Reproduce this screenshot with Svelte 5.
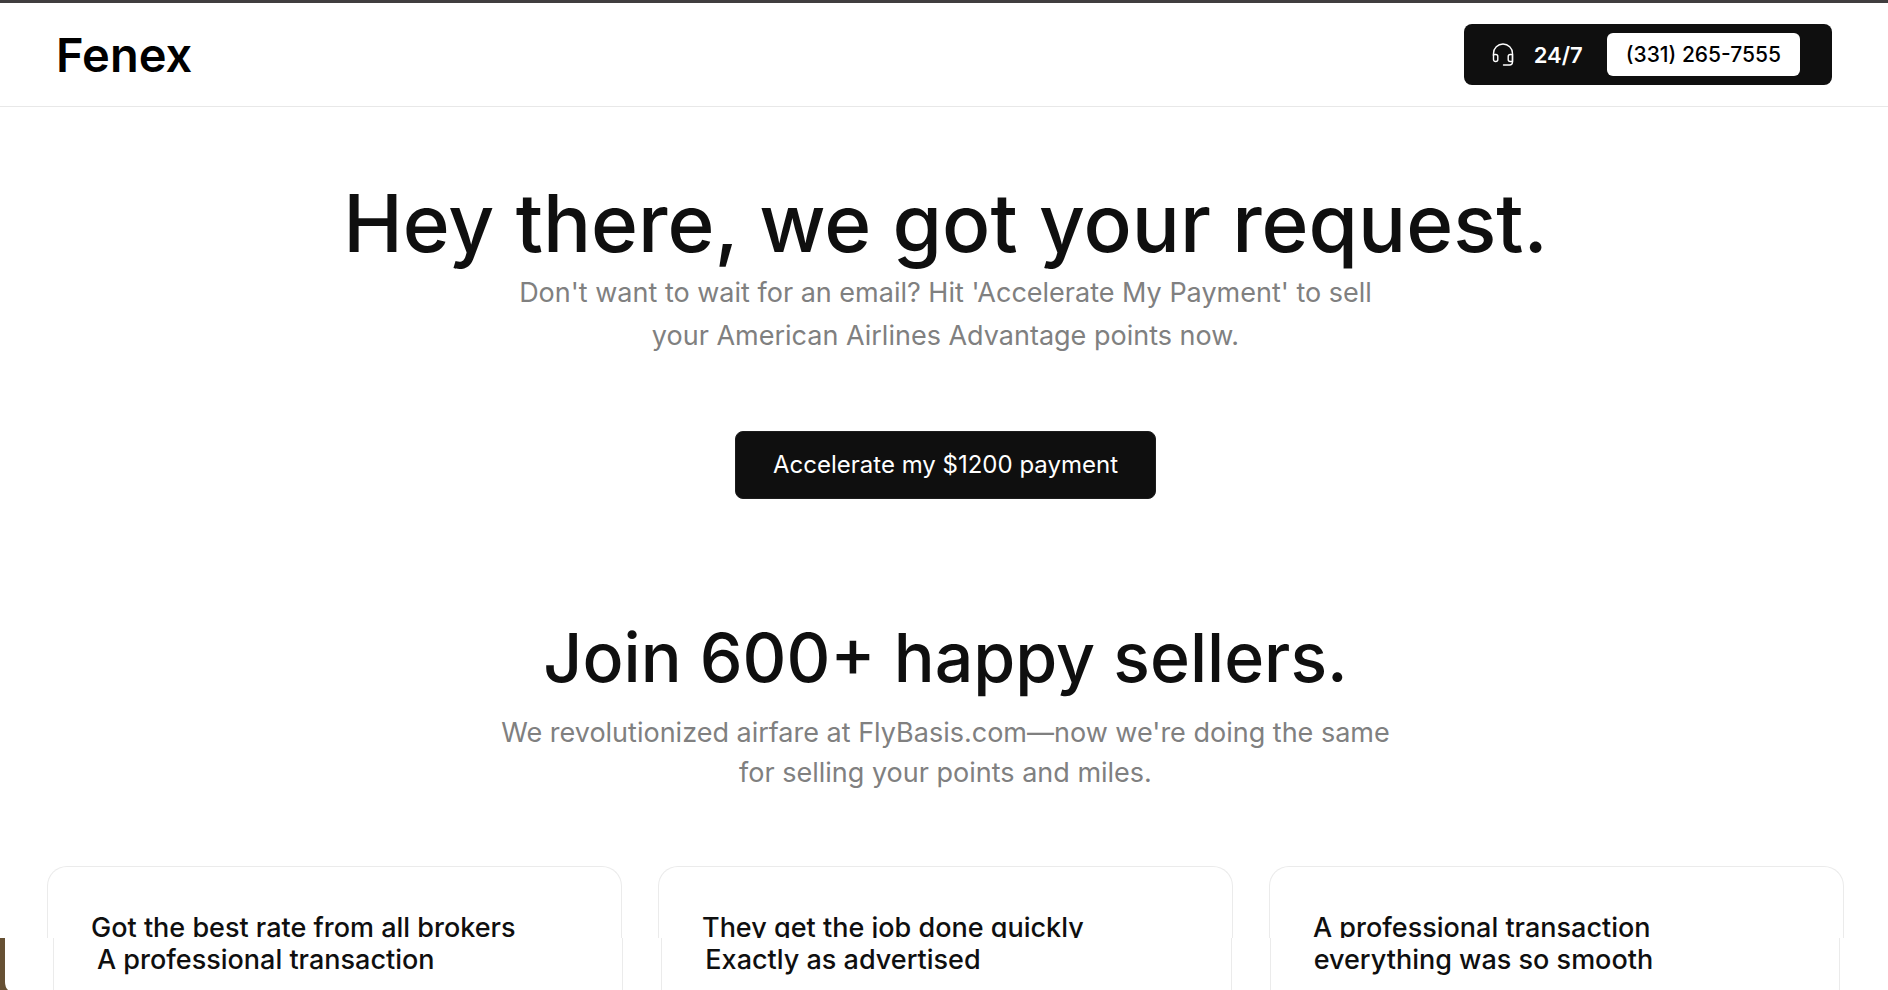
<script>
  const phone = "(331) 265-7555";
  const payout = 1200;

  const reviews = [
    "Got the best rate from all brokers",
    "They get the job done quickly",
    "A professional transaction",
  ];

  const moreReviews = [
    "A professional transaction",
    "Exactly as advertised",
    "everything was so smooth",
  ];
</script>

<div class="page">
  <header>
    <a class="logo" href="/">Fenex</a>
    <div class="support">
      <svg class="headset" viewBox="0 0 22 24" aria-hidden="true">
        <path d="M1.5 12.5V10.5a9.5 9.5 0 0 1 19 0v8.5a3 3 0 0 1-3 3h-6" />
        <path d="M1.5 11.5h2.3a2 2 0 0 1 2 2v3a2 2 0 0 1-2 2h-.3a2 2 0 0 1-2-2z" />
        <path d="M20.5 11.5h-2.3a2 2 0 0 0-2 2v3a2 2 0 0 0 2 2h2.3z" />
      </svg>
      <span class="hours">24/7</span>
      <a class="phone" href="tel:+13312657555">{phone}</a>
    </div>
  </header>

  <main>
    <section class="hero">
      <h1>Hey there, we got your request.</h1>
      <p>
        Don't want to wait for an email? Hit 'Accelerate My Payment' to sell<br />
        your American Airlines Advantage points now.
      </p>
      <button type="button">Accelerate my ${payout} payment</button>
    </section>

    <section class="sellers">
      <h2>Join 600+ happy sellers.</h2>
      <p>
        We revolutionized airfare at FlyBasis.com—now we're doing the same<br />
        for selling your points and miles.
      </p>
    </section>

    <div class="reviews first">
      {#each reviews as title}
        <article class="card">
          <h3>{title}</h3>
        </article>
      {/each}
    </div>

    <div class="reviews second">
      <svg class="photo" viewBox="0 0 8 52" aria-hidden="true">
        <path d="M0 0h5v44q0 5 3 8H0z" />
      </svg>
      {#each moreReviews as title}
        <article class="card">
          <h3>{title}</h3>
        </article>
      {/each}
    </div>
  </main>
</div>

<style>
  :global(body) {
    margin: 0;
    background: #fff;
    overflow: hidden;
  }

  .page {
    border-top: 3px solid #403e3f;
    font-family: Inter, "Liberation Sans", sans-serif;
    color: #0f0f0f;
  }

  header {
    display: flex;
    justify-content: space-between;
    align-items: center;
    height: 103px;
    padding: 0 56px;
    border-bottom: 1px solid #e8e8e8;
  }

  a {
    color: inherit;
    text-decoration: none;
  }

  .logo {
    font-size: 47px;
    font-weight: 600;
    line-height: 60px;
    color: #000;
  }

  .support {
    display: flex;
    align-items: center;
    box-sizing: border-box;
    height: 61px;
    padding: 0 32px 0 28px;
    border-radius: 8px;
    background: #0f0f0f;
    color: #fff;
  }

  .headset {
    width: 22px;
    height: 24px;
    fill: none;
    stroke: #fff;
    stroke-width: 1.4;
    stroke-linecap: round;
    stroke-linejoin: round;
  }

  .hours {
    margin: 0 24px 0 20px;
    font-size: 22px;
    font-weight: 600;
  }

  .phone {
    padding: 0 19px;
    border-radius: 6px;
    background: #fff;
    color: #000;
    font-size: 21px;
    font-weight: 500;
    line-height: 43px;
  }

  .hero,
  .sellers {
    display: flex;
    flex-direction: column;
    align-items: center;
    text-align: center;
  }

  .hero {
    padding: 70px 44px 0 47px;
  }

  h1,
  h2,
  h3,
  p {
    margin: 0;
    font-weight: 500;
  }

  h1 {
    font-size: 80px;
    line-height: 92px;
  }

  h2 {
    font-size: 68px;
    line-height: 80px;
  }

  p {
    color: #808080;
    font-size: 27px;
    font-weight: 400;
  }

  .hero p {
    margin-top: 2px;
    line-height: 43px;
  }

  button {
    margin-top: 74px;
    padding: 0 37px;
    border: 1px solid #1c1c1c;
    border-radius: 8px;
    background: #0f0f0f;
    color: #fff;
    font-family: inherit;
    font-size: 24px;
    line-height: 66px;
  }

  .sellers {
    padding: 118px 44px 73px 47px;
  }

  .sellers p {
    margin-top: 16px;
    line-height: 40px;
  }

  .reviews {
    display: grid;
    grid-template-columns: repeat(3, 1fr);
    height: 72px;
    overflow: hidden;
  }

  .first {
    gap: 36px;
    padding: 0 44px 0 47px;
  }

  .second {
    position: relative;
    gap: 38px;
    height: 52px;
    padding: 0 48px 0 53px;
  }

  .card {
    padding: 42px 43px 0;
    border: 1px solid #ebebeb;
    border-bottom: 0;
    border-radius: 20px 20px 0 0;
  }

  .second .card {
    padding-top: 3px;
    border-top: 0;
    border-radius: 0;
  }

  .photo {
    position: absolute;
    bottom: 0;
    left: 0;
    width: 8px;
    height: 52px;
    fill: #665033;
  }

  h3 {
    font-size: 27px;
    line-height: 38px;
    white-space: nowrap;
  }
</style>
